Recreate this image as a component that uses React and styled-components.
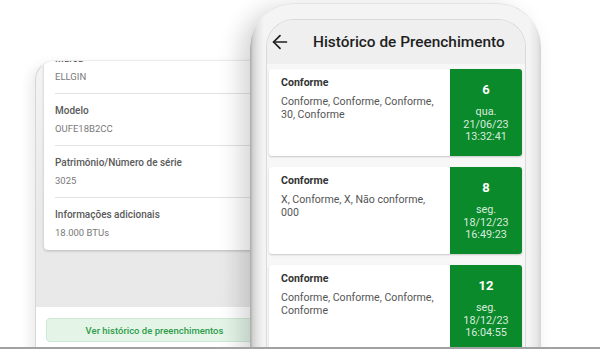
import React from "react";
import styled, { createGlobalStyle } from "styled-components";
import { ArrowLeft } from "lucide-react";

const GlobalStyle = createGlobalStyle`
  body {
    margin: 0;
    background: #fff;
    font-family: Roboto, "Liberation Sans", sans-serif;
  }
`;

const Stage = styled.div`
  position: relative;
  width: 600px;
  height: 352px;
  overflow: hidden;
  display: flex;
  align-items: flex-start;
  background: #fff;
`;

// left screen (equipment details)
const LeftPanel = styled.div`
  margin: 60px 0 0 35px;
  width: 240px;
  height: 292px;
  flex-shrink: 0;
  display: flex;
  flex-direction: column;
  border-radius: 20px 0 0 0;
  border-left: 1px solid #d6d6d6;
  border-top: 1px solid #ececec;
  background: linear-gradient(180deg, #f4f4f4 0, #eaeaea 140px, #e8e8e8 100%);
  box-shadow: -5px 4px 12px rgba(0, 0, 0, 0.08);
  overflow: hidden;
`;

const Scroll = styled.div`
  flex: 1;
  padding-left: 8px;
`;

const InfoCard = styled.div`
  margin-top: -19px;
  width: 222px;
  background: #fff;
  border-radius: 4px;
  box-shadow: 0 1px 3px rgba(0, 0, 0, 0.22);
`;

const Field = styled.div`
  margin: 0 11px;
  padding: 10px 0 ${(p) => (p.$last ? "10px" : "9px")};
  border-bottom: ${(p) => (p.$last ? "none" : "1px solid #e2e2e2")};
`;

const FieldLabel = styled.div`
  font-size: 10px;
  line-height: 14px;
  font-weight: 500;
  color: #5a5a5a;
  white-space: nowrap;
`;

const FieldValue = styled.div`
  margin-top: 4px;
  font-size: 9.5px;
  line-height: 14px;
  color: #7a7a7a;
`;

const Footer = styled.div`
  height: 46px;
  flex-shrink: 0;
  background: #fff;
  padding: 11px 0 0 10px;
  box-sizing: border-box;
`;

const HistoryButton = styled.div`
  width: 217px;
  height: 24px;
  box-sizing: border-box;
  display: flex;
  align-items: center;
  justify-content: center;
  background: #e4f5e8;
  border: 1px solid #cfe9d6;
  border-radius: 4px;
  color: #2e9c49;
  font-size: 9.5px;
  font-weight: 500;
`;

// right phone
const Phone = styled.div`
  position: relative;
  z-index: 1;
  margin: 3px 0 0 -26px;
  width: 291px;
  height: 420px;
  flex-shrink: 0;
  box-sizing: border-box;
  padding: 15px 15px 0 16px;
  border-radius: 44px 44px 0 0;
  border-top: 1px solid #e4e4e4;
  background: linear-gradient(
    90deg,
    #a9a9a9 0,
    #d2d2d2 3px,
    #e6e6e6 8px,
    #f4f4f4 14px,
    #f4f4f4 calc(100% - 12px),
    #e7e7e7 calc(100% - 4px),
    #d4d4d4 100%
  );
  box-shadow: -10px 4px 22px rgba(0, 0, 0, 0.16);
`;

const Screen = styled.div`
  height: 100%;
  border-radius: 28px 28px 0 0;
  border: 1px solid #dadada;
  border-bottom: none;
  background: #f7f7f7;
  overflow: hidden;
`;

const Header = styled.div`
  height: 44px;
  display: flex;
  align-items: center;
  gap: 22px;
  padding-left: 2px;
  background: #efefef;
  color: #1f1f1f;
`;

const Title = styled.div`
  font-size: 15.4px;
  font-weight: 500;
`;

const List = styled.div`
  display: flex;
  flex-direction: column;
  gap: 11px;
  padding: 5px 3px 0 2px;
`;

const EntryCard = styled.div`
  height: 87px;
  display: flex;
  background: #fff;
  border-radius: 3px;
  box-shadow: 0 1px 2px rgba(0, 0, 0, 0.2);
`;

const EntryText = styled.div`
  flex: 1;
  padding: 7px 12px 0;
`;

const EntryTitle = styled.div`
  font-size: 10.6px;
  line-height: 14px;
  font-weight: 700;
  color: #333;
`;

const EntryBody = styled.div`
  margin-top: 6px;
  font-size: 10.6px;
  line-height: 12.6px;
  color: #555;
`;

const Badge = styled.div`
  width: 72px;
  flex-shrink: 0;
  background: #0b8a2b;
  border-radius: 0 3px 3px 0;
  text-align: center;
  color: #fff;
  padding-top: 13px;
  box-sizing: border-box;
`;

const Count = styled.div`
  font-size: 13px;
  line-height: 16px;
  font-weight: 700;
`;

const Stamp = styled.div`
  margin-top: 8px;
  font-size: 10.8px;
  line-height: 12.6px;
  color: rgba(255, 255, 255, 0.85);
`;

const BottomEdge = styled.div`
  position: absolute;
  left: 0;
  right: 0;
  top: 347px;
  height: 5px;
  z-index: 2;
  background: #fff;
  border-top: 2px solid #a2a2a2;
`;

const fields = [
  { label: "Marca", value: "ELLGIN" },
  { label: "Modelo", value: "OUFE18B2CC" },
  { label: "Patrimônio/Número de série", value: "3025" },
  { label: "Informações adicionais", value: "18.000 BTUs" },
];

const entries = [
  {
    title: "Conforme",
    body: "Conforme, Conforme, Conforme, 30, Conforme",
    count: 6,
    day: "qua.",
    date: "21/06/23",
    time: "13:32:41",
  },
  {
    title: "Conforme",
    body: "X, Conforme, X, Não conforme, 000",
    count: 8,
    day: "seg.",
    date: "18/12/23",
    time: "16:49:23",
  },
  {
    title: "Conforme",
    body: "Conforme, Conforme, Conforme, Conforme",
    count: 12,
    day: "seg.",
    date: "18/12/23",
    time: "16:04:55",
  },
];

const App = () => {
  return (
    <>
      <GlobalStyle />
      <Stage>
        <LeftPanel>
          <Scroll>
            <InfoCard>
              {fields.map((f, index) => (
                <Field key={index} $last={index === fields.length - 1}>
                  <FieldLabel>{f.label}</FieldLabel>
                  <FieldValue>{f.value}</FieldValue>
                </Field>
              ))}
            </InfoCard>
          </Scroll>
          <Footer>
            <HistoryButton>Ver histórico de preenchimentos</HistoryButton>
          </Footer>
        </LeftPanel>

        <Phone>
          <Screen>
            <Header>
              <ArrowLeft size={22} strokeWidth={1.9} />
              <Title>Histórico de Preenchimento</Title>
            </Header>
            <List>
              {entries.map((e, index) => (
                <EntryCard key={index}>
                  <EntryText>
                    <EntryTitle>{e.title}</EntryTitle>
                    <EntryBody>{e.body}</EntryBody>
                  </EntryText>
                  <Badge>
                    <Count>{e.count}</Count>
                    <Stamp>
                      {e.day}
                      <br />
                      {e.date}
                      <br />
                      {e.time}
                    </Stamp>
                  </Badge>
                </EntryCard>
              ))}
            </List>
          </Screen>
        </Phone>
        <BottomEdge />
      </Stage>
    </>
  );
};

export default App;
